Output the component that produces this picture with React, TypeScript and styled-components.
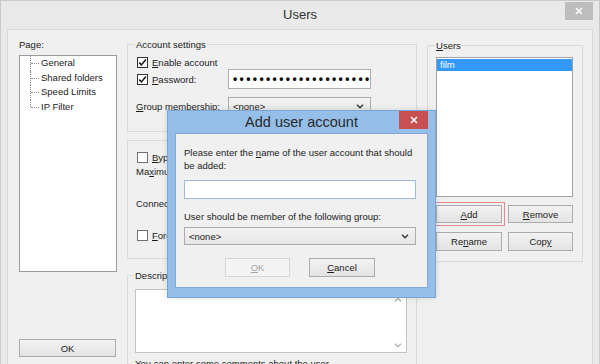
import styled, { createGlobalStyle } from 'styled-components';

const GlobalStyle = createGlobalStyle`
  html, body {
    margin: 0;
    padding: 0;
  }
  body {
    width: 600px;
    height: 364px;
    overflow: hidden;
    font-family: 'Liberation Sans', Arial, sans-serif;
    font-size: 9.5px;
    color: #1b1b1b;
  }
  u {
    text-underline-offset: 1px;
  }
`;

const Window = styled.div`
  position: relative;
  width: 600px;
  height: 364px;
  box-sizing: border-box;
  background: #e9e9e9;
  border: 1px solid #c9c9c9;
  border-bottom: none;
  padding: 0 6px;
  display: flex;
  flex-direction: column;
  overflow: hidden;
`;

const TitleBar = styled.div`
  height: 28px;
  flex: none;
  display: grid;
  grid-template-columns: 1fr auto 1fr;
  align-items: start;
`;

const WindowTitle = styled.div`
  grid-column: 2;
  line-height: 28px;
  font-size: 13px;
  color: #333;
`;

const CloseButton = styled.div<{ $active?: boolean }>`
  grid-column: 3;
  justify-self: end;
  width: ${(p) => (p.$active ? 29 : 28)}px;
  height: 18px;
  margin-top: ${(p) => (p.$active ? 0 : 1)}px;
  background: ${(p) => (p.$active ? '#c75050' : '#bdbdbd')};
  display: flex;
  align-items: center;
  justify-content: center;
`;

const Client = styled.div`
  flex: 1;
  background: #f0f0f0;
  border: 1px solid #d9d9d9;
  display: flex;
  gap: 10px;
  padding: 8px 0 0 11px;
`;

const Column = styled.div<{ $w: number }>`
  width: ${(p) => p.$w}px;
  flex: none;
  display: flex;
  flex-direction: column;
`;

const Label = styled.div<{ $mt?: number }>`
  line-height: 13px;
  margin-top: ${(p) => p.$mt ?? 0}px;
  white-space: nowrap;
`;

const Tree = styled.div`
  margin-top: 4px;
  height: 217px;
  box-sizing: border-box;
  background: #fff;
  border: 1px solid #9a9a9a;
`;

const TreeItem = styled.div<{ $last?: boolean }>`
  position: relative;
  line-height: 14.5px;
  padding-left: 21px;
  white-space: nowrap;

  &::before {
    content: '';
    position: absolute;
    left: 10px;
    top: 0;
    height: ${(p) => (p.$last ? '7px' : '100%')};
    border-left: 1px dotted #8a8a8a;
  }
  &::after {
    content: '';
    position: absolute;
    left: 11px;
    top: 7px;
    width: 8px;
    border-top: 1px dotted #8a8a8a;
  }
`;

const OkSlot = styled.div`
  margin-top: 67px;
`;

const Button = styled.button<{ $w?: number; $h?: number; $disabled?: boolean; $focus?: boolean }>`
  width: ${(p) => (p.$w ? `${p.$w}px` : '100%')};
  height: ${(p) => p.$h ?? 18}px;
  box-sizing: border-box;
  padding: 0;
  margin: 0;
  font: inherit;
  color: ${(p) => (p.$disabled ? '#a3a3a3' : '#1b1b1b')};
  border: 1px solid ${(p) => (p.$disabled ? '#d6d6d6' : '#acacac')};
  background: ${(p) =>
    p.$disabled ? '#f4f4f4' : 'linear-gradient(#f2f2f2, #e4e4e4)'};
  outline: ${(p) => (p.$focus ? '1px solid #e38b8b' : 'none')};
  outline-offset: 2px;
`;

const Group = styled.fieldset<{ $pl?: number; $pr?: number; $pb?: number; $mt?: number }>`
  margin: ${(p) => p.$mt ?? 0}px 0 0 0;
  min-width: 0;
  border: 1px solid #dadada;
  padding: 0 ${(p) => p.$pr ?? 9}px ${(p) => p.$pb ?? 0}px ${(p) => p.$pl ?? 8}px;
  display: flex;
  flex-direction: column;
`;

const Legend = styled.legend`
  padding: 0 1px;
  margin-left: -1px;
  line-height: 13px;
`;

const Panel = styled.div<{ $h: number; $mt?: number }>`
  height: ${(p) => p.$h}px;
  margin-top: ${(p) => p.$mt ?? 0}px;
  box-sizing: border-box;
  border: 1px solid #dadada;
  padding-left: 8px;
  display: flex;
  flex-direction: column;
`;

const Row = styled.div<{ $h?: number; $mt?: number }>`
  display: flex;
  align-items: center;
  height: ${(p) => p.$h ?? 14}px;
  margin-top: ${(p) => p.$mt ?? 0}px;
  white-space: nowrap;
`;

const RowLabel = styled.div<{ $w?: number }>`
  width: ${(p) => (p.$w ? `${p.$w}px` : 'auto')};
  flex: none;
  display: flex;
  align-items: center;
`;

const Box = styled.span<{ $checked?: boolean }>`
  width: 11px;
  height: 11px;
  box-sizing: border-box;
  margin: 0 4px 0 1px;
  border: 1px solid ${(p) => (p.$checked ? '#333' : '#707070')};
  background: #fff;
  display: inline-flex;
  align-items: center;
  justify-content: center;
  flex: none;
`;

const TextInput = styled.div<{ $w?: number; $h?: number; $border?: string; $mt?: number }>`
  width: ${(p) => (p.$w ? `${p.$w}px` : 'auto')};
  height: ${(p) => p.$h ?? 20}px;
  margin-top: ${(p) => p.$mt ?? 0}px;
  box-sizing: border-box;
  background: #fff;
  border: 1px solid ${(p) => p.$border ?? '#abadb3'};
  overflow: hidden;
  display: flex;
  align-items: center;
  padding-left: 4px;
`;

const Dots = styled.span`
  font-size: 12px;
  font-weight: bold;
  letter-spacing: 2.4px;
  white-space: nowrap;
  color: #111;
`;

const Combo = styled.div<{ $w?: number; $mt?: number }>`
  width: ${(p) => (p.$w ? `${p.$w}px` : 'auto')};
  height: 18px;
  margin-top: ${(p) => p.$mt ?? 0}px;
  box-sizing: border-box;
  border: 1px solid #acacac;
  background: linear-gradient(#f3f3f3, #e6e6e6);
  display: flex;
  align-items: center;
  justify-content: space-between;
  padding: 0 6px 0 4px;
`;

const Memo = styled.div`
  margin-top: 7px;
  height: 64px;
  box-sizing: border-box;
  background: #fff;
  border: 1px solid #c4c4c4;
  display: flex;
  justify-content: flex-end;
`;

const ScrollTrack = styled.div`
  width: 17px;
  display: flex;
  flex-direction: column;
  justify-content: space-between;
  align-items: center;
  padding: 7px 0 4px;
`;

const ListBox = styled.div`
  margin-top: 5px;
  height: 140px;
  box-sizing: border-box;
  background: #fff;
  border: 1px solid #a2a2a2;
  padding: 1px 0 0 0;
`;

const ListRow = styled.div<{ $selected?: boolean }>`
  height: 12px;
  line-height: 12px;
  padding-left: 3px;
  background: ${(p) => (p.$selected ? '#3399ff' : 'transparent')};
  color: ${(p) => (p.$selected ? '#fff' : 'inherit')};
`;

const ButtonGrid = styled.div<{ $mt: number }>`
  display: grid;
  grid-template-columns: 66px 65px;
  column-gap: 6px;
  margin-top: ${(p) => p.$mt}px;
`;

const Dialog = styled.div`
  position: absolute;
  left: 166px;
  top: 109px;
  width: 269px;
  height: 188px;
  box-sizing: border-box;
  background: #95bfe9;
  border: 1px solid #78a6d8;
  padding: 0 7px 9px;
  display: flex;
  flex-direction: column;
  box-shadow: 0 0 6px rgba(0, 0, 0, 0.12);
`;

const DialogTitleBar = styled.div`
  height: 22px;
  flex: none;
  display: grid;
  grid-template-columns: 1fr auto 1fr;
  align-items: start;
`;

const DialogTitle = styled.div`
  grid-column: 2;
  line-height: 23px;
  font-size: 14.5px;
  color: #2a2a2a;
`;

const DialogBody = styled.div`
  flex: 1;
  background: #f0f0f0;
  border: 1px solid #84a9d2;
  padding: 12px 11px 0 8px;
  display: flex;
  flex-direction: column;
`;

const Prompt = styled.div<{ $mt?: number }>`
  line-height: 13px;
  margin-top: ${(p) => p.$mt ?? 0}px;
  white-space: nowrap;
`;

const DialogButtons = styled.div`
  margin-top: 13px;
  display: flex;
  justify-content: center;
  gap: 19px;
`;

const Note = styled.div`
  margin-top: 4px;
  line-height: 13px;
  white-space: nowrap;
`;

const CloseX = ({ color }: { color: string }) => (
  <svg width="8" height="8" viewBox="0 0 8 8">
    <path d="M1 1 L7 7 M7 1 L1 7" stroke={color} strokeWidth="1.5" />
  </svg>
);

const Check = () => (
  <svg width="9" height="9" viewBox="0 0 9 9">
    <path d="M1.2 4.6 L3.4 6.9 L7.9 1.6" stroke="#1a1a1a" strokeWidth="1.6" fill="none" />
  </svg>
);

const Chevron = ({ up, color = '#333' }: { up?: boolean; color?: string }) => (
  <svg width="8" height="5" viewBox="0 0 8 5">
    <path
      d={up ? 'M1 4.2 L4 1.2 L7 4.2' : 'M1 0.8 L4 3.8 L7 0.8'}
      stroke={color}
      strokeWidth="1.3"
      fill="none"
    />
  </svg>
);

const CheckBox = ({ checked }: { checked?: boolean }) => (
  <Box $checked={checked}>{checked && <Check />}</Box>
);

export default function App() {
  return (
    <>
      <GlobalStyle />
      <Window>
        <TitleBar>
          <WindowTitle>Users</WindowTitle>
          <CloseButton>
            <CloseX color="#fff" />
          </CloseButton>
        </TitleBar>

        <Client>
          <Column $w={98}>
            <Label>Page:</Label>
            <Tree>
              <TreeItem>General</TreeItem>
              <TreeItem>Shared folders</TreeItem>
              <TreeItem>Speed Limits</TreeItem>
              <TreeItem $last>IP Filter</TreeItem>
            </Tree>
            <OkSlot>
              <Button $w={97}>OK</Button>
            </OkSlot>
          </Column>

          <Column $w={290}>
            <Group $pb={16}>
              <Legend>Account settings</Legend>
              <Row $mt={4}>
                <CheckBox checked />
                <span>
                  <u>E</u>nable account
                </span>
              </Row>
              <Row $h={20}>
                <RowLabel $w={92}>
                  <CheckBox checked />
                  <span>
                    <u>P</u>assword:
                  </span>
                </RowLabel>
                <TextInput $w={143}>
                  <Dots>••••••••••••••••••••••</Dots>
                </TextInput>
              </Row>
              <Row $h={18} $mt={8}>
                <RowLabel $w={92}>
                  <span>
                    <u>G</u>roup membership:
                  </span>
                </RowLabel>
                <Combo $w={143}>
                  <span>&lt;none&gt;</span>
                  <Chevron />
                </Combo>
              </Row>
            </Group>

            <Panel $h={119} $mt={8}>
              <Row $mt={9}>
                <CheckBox />
                <span>
                  <u>B</u>ypass userlimit of server
                </span>
              </Row>
              <Row>
                <span>
                  Ma<u>x</u>imum connection count:
                </span>
              </Row>
              <Row $mt={18}>
                <span>Connection limit per IP:</span>
              </Row>
              <Row $mt={18}>
                <CheckBox />
                <span>
                  <u>F</u>orce SSL for user login
                </span>
              </Row>
            </Panel>

            <Group $mt={10} $pl={7}>
              <Legend>Description</Legend>
              <Memo>
                <ScrollTrack>
                  <Chevron up color="#b3b3b3" />
                  <Chevron color="#b3b3b3" />
                </ScrollTrack>
              </Memo>
              <Note>You can enter some comments about the user</Note>
            </Group>
          </Column>

          <Column $w={156}>
            <Group $mt={1} $pb={10}>
              <Legend>
                <u>U</u>sers
              </Legend>
              <ListBox>
                <ListRow $selected>film</ListRow>
              </ListBox>
              <ButtonGrid $mt={8}>
                <Button $focus>
                  <u>A</u>dd
                </Button>
                <Button>
                  <u>R</u>emove
                </Button>
              </ButtonGrid>
              <ButtonGrid $mt={9}>
                <Button $h={19}>
                  Re<u>n</u>ame
                </Button>
                <Button $h={19}>
                  Cop<u>y</u>
                </Button>
              </ButtonGrid>
            </Group>
          </Column>
        </Client>

        <Dialog>
          <DialogTitleBar>
            <DialogTitle>Add user account</DialogTitle>
            <CloseButton $active>
              <CloseX color="#fff" />
            </CloseButton>
          </DialogTitleBar>
          <DialogBody>
            <Prompt>
              Please enter the <u>n</u>ame of the user account that should
              <br />
              be added:
            </Prompt>
            <TextInput $h={19} $border="#9bbbe0" $mt={8} />
            <Prompt $mt={11}>User should be member of the following group:</Prompt>
            <Combo $mt={4}>
              <span>&lt;none&gt;</span>
              <Chevron />
            </Combo>
            <DialogButtons>
              <Button $w={65} $h={19} $disabled>
                <u>O</u>K
              </Button>
              <Button $w={66} $h={19}>
                <u>C</u>ancel
              </Button>
            </DialogButtons>
          </DialogBody>
        </Dialog>
      </Window>
    </>
  );
}
